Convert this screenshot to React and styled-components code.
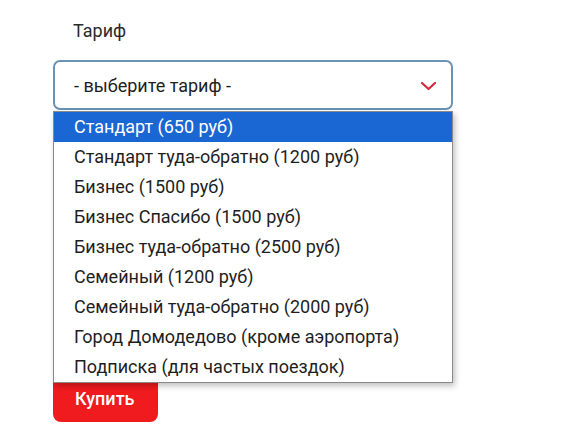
import React from 'react';
import styled, { createGlobalStyle } from 'styled-components';

const Global = createGlobalStyle`
  html, body {
    margin: 0;
    padding: 0;
    background: #fff;
  }
  body {
    font-family: Roboto, "Noto Sans", Arial, sans-serif;
    color: #1e1e1e;
  }
`;

const Form = styled.div`
  padding: 20px 0 0 53px;
  width: 400px;
`;

const Label = styled.div`
  font-size: 18px;
  line-height: 21px;
  color: #2a2a2a;
  padding-left: 20px;
`;

const Field = styled.div`
  position: relative;
  margin-top: 19px;
`;

const SelectBox = styled.div`
  box-sizing: border-box;
  height: 50px;
  border: 2px solid #6a93b4;
  border-radius: 7px;
  display: flex;
  align-items: center;
  justify-content: space-between;
  padding: 0 14px 0 19px;
  font-size: 18px;
  color: #1e1e1e;
  background: #fff;
`;

const Chevron = styled.svg`
  width: 17px;
  height: 10px;
  margin-top: 2px;
`;

const Menu = styled.ul`
  position: absolute;
  top: calc(100% + 1px);
  left: 0;
  width: 400px;
  box-sizing: border-box;
  margin: 0;
  padding: 0;
  list-style: none;
  background: #fff;
  border: 1px solid #8a8a8a;
  box-shadow: 2px 3px 6px rgba(0, 0, 0, 0.25);
  z-index: 2;
`;

const Option = styled.li`
  height: 30px;
  line-height: 30px;
  padding-left: 20px;
  font-size: 18px;
  white-space: nowrap;
  color: ${p => (p.$active ? '#fff' : '#1e1e1e')};
  background: ${p => (p.$active ? '#1a66d2' : 'transparent')};
`;

const Button = styled.button`
  margin-top: 264px;
  width: 105px;
  height: 48px;
  border: none;
  border-radius: 8px;
  background: #f01b1f;
  color: #fff;
  font-family: inherit;
  font-size: 18px;
  font-weight: 500;
  text-align: left;
  padding: 0 0 0 22px;
`;

const tariffs = [
  'Стандарт (650 руб)',
  'Стандарт туда-обратно (1200 руб)',
  'Бизнес (1500 руб)',
  'Бизнес Спасибо (1500 руб)',
  'Бизнес туда-обратно (2500 руб)',
  'Семейный (1200 руб)',
  'Семейный туда-обратно (2000 руб)',
  'Город Домодедово (кроме аэропорта)',
  'Подписка (для частых поездок)',
];

export default function App() {
  return (
    <>
      <Global />
      <Form>
        <Label>Тариф</Label>
        <Field>
          <SelectBox>
            <span>- выберите тариф -</span>
            <Chevron viewBox="0 0 17 10">
              <path d="M2 2 L8.5 8 L15 2" fill="none" stroke="#d4283c" strokeWidth="2.2" strokeLinecap="round" strokeLinejoin="round" />
            </Chevron>
          </SelectBox>
          <Menu>
            {tariffs.map((t, i) => (
              <Option key={t} $active={i === 0}>{t}</Option>
            ))}
          </Menu>
        </Field>
        <Button>Купить</Button>
      </Form>
    </>
  );
}
